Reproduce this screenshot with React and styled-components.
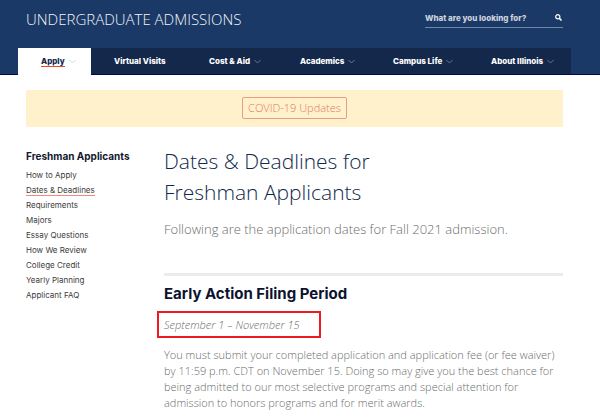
import React from 'react';
import styled, { createGlobalStyle } from 'styled-components';

const GlobalStyle = createGlobalStyle`
  * {
    box-sizing: border-box;
  }

  body {
    margin: 0;
    background: #fff;
    color: #6c6c6c;
    font-family: 'Open Sans', 'Noto Sans', sans-serif;
    font-weight: 300;
  }

  a {
    color: inherit;
    text-decoration: none;
  }

  h1, h2, p, ul {
    margin: 0;
    padding: 0;
  }

  ul {
    list-style: none;
  }
`;

const Header = styled.header`
  padding: 0 29px 0 18px;
  background: #1b3966;
  border-bottom: 1px solid #05054a;
`;

const TopBar = styled.div`
  display: flex;
  justify-content: space-between;
  align-items: flex-start;
  padding: 8px 8px 18px;
`;

const SiteTitle = styled.a`
  color: #f2f5fa;
  font-size: 15px;
  line-height: 22px;
`;

const Search = styled.form`
  display: flex;
  align-items: center;
  width: 138px;
  height: 20px;
  border-bottom: 1px solid #6f86a8;
`;

const SearchInput = styled.input`
  flex: 1;
  min-width: 0;
  padding: 0;
  border: 0;
  outline: 0;
  background: transparent;
  color: #fff;
  font-family: Inter, sans-serif;
  font-size: 8px;
  font-weight: 800;

  &::placeholder {
    color: #cdd3dc;
    opacity: 1;
  }
`;

const SearchButton = styled.button`
  display: flex;
  padding: 0 1px 0 0;
  border: 0;
  background: transparent;
  color: #fff;
  cursor: pointer;
`;

const Nav = styled.nav`
  display: grid;
  grid-template-columns: 73fr 95fr 91fr 93fr 98fr 103fr;
  background: #14284b;
`;

const NavLink = styled.a`
  display: flex;
  align-items: center;
  gap: 4px;
  height: ${props => (props.$active ? '27px' : '26px')};
  padding-left: 23px;
  margin-bottom: ${props => (props.$active ? '-1px' : '0')};
  background: ${props => (props.$active ? '#fff' : 'transparent')};
  color: ${props => (props.$active ? '#13294b' : '#fff')};
  font-family: Inter, sans-serif;
  font-size: 8px;
  font-weight: 800;
  line-height: 10px;
  white-space: nowrap;

  span {
    border-bottom: 1px solid ${props => (props.$active ? '#e84a27' : 'transparent')};
  }

  svg {
    color: ${props => (props.$active ? '#d5d8dd' : '#64779a')};
  }
`;

const Page = styled.div`
  padding: 15px 37px 0 26px;
`;

const Alert = styled.div`
  display: flex;
  justify-content: center;
  padding: 7px 8px 8px;
  border-radius: 1px;
  background: #fff1cc;
`;

const AlertLink = styled.a`
  padding: 0 5px;
  border: 1px solid #ea9c86;
  border-radius: 2px;
  color: #e07a66;
  font-size: 11px;
  line-height: 20px;
`;

const Columns = styled.div`
  display: grid;
  grid-template-columns: 112px 1fr;
  gap: 26px;
  padding-top: 19px;
`;

const SideTitle = styled.a`
  display: block;
  margin-bottom: 2px;
  color: #13182f;
  font-family: Inter, sans-serif;
  font-size: 10px;
  font-weight: 700;
  line-height: 20px;
  white-space: nowrap;
`;

const SideItem = styled.li`
  color: #3c3c3c;
  font-family: Inter, sans-serif;
  font-size: 8px;
  font-weight: 400;
  line-height: 15px;

  a {
    display: inline-block;
    line-height: 9px;
    border-bottom: 1px solid ${props => (props.$active ? '#ee8a75' : 'transparent')};
  }
`;

const Title = styled.h1`
  max-width: 230px;
  color: #13294b;
  font-size: 21px;
  font-weight: 300;
  line-height: 31px;
`;

const Intro = styled.p`
  margin-top: 11px;
  font-size: 13px;
  line-height: 20px;
`;

const Section = styled.section`
  margin-top: 34px;
  padding-top: 8px;
  border-top: 3px solid #ebebeb;
`;

const SectionTitle = styled.h2`
  color: #0c1230;
  font-family: Inter, sans-serif;
  font-size: 15px;
  font-weight: 700;
  line-height: 20px;
`;

const DateRange = styled.p`
  width: 164px;
  margin: 7px 0 0 -7px;
  padding: 0 5px;
  border: 2px solid #ee1c20;
  font-size: 11px;
  font-style: italic;
  line-height: 23px;
`;

const Copy = styled.p`
  margin-top: 9px;
  font-size: 11px;
  line-height: 16px;
`;

const Chevron = () => (
  <svg width="7" height="5" viewBox="0 0 7 5" fill="none" stroke="currentColor" aria-hidden="true">
    <path d="M.5 1 3.5 4 6.5 1" />
  </svg>
);

const SearchIcon = () => (
  <svg width="7" height="7" viewBox="0 0 7 7" fill="none" stroke="currentColor" aria-hidden="true">
    <circle cx="2.8" cy="2.8" r="2.1" strokeWidth="1.2" />
    <path d="M4.4 4.4 6.5 6.5" strokeWidth="1.5" />
  </svg>
);

const navItems = [
  { label: 'Apply', menu: true, active: true },
  { label: 'Virtual Visits' },
  { label: 'Cost & Aid', menu: true },
  { label: 'Academics', menu: true },
  { label: 'Campus Life', menu: true },
  { label: 'About Illinois', menu: true },
];

const sideItems = [
  'How to Apply',
  'Dates & Deadlines',
  'Requirements',
  'Majors',
  'Essay Questions',
  'How We Review',
  'College Credit',
  'Yearly Planning',
  'Applicant FAQ',
];

const App = () => (
  <>
    <GlobalStyle />
    <Header>
      <TopBar>
        <SiteTitle href="#">UNDERGRADUATE ADMISSIONS</SiteTitle>
        <Search role="search">
          <SearchInput type="text" aria-label="Search" placeholder="What are you looking for?" />
          <SearchButton type="submit" aria-label="Submit search">
            <SearchIcon />
          </SearchButton>
        </Search>
      </TopBar>
      <Nav>
        {navItems.map(item => (
          <NavLink key={item.label} href="#" $active={item.active}>
            <span>{item.label}</span>
            {item.menu && <Chevron />}
          </NavLink>
        ))}
      </Nav>
    </Header>

    <Page>
      <Alert>
        <AlertLink href="#">COVID-19 Updates</AlertLink>
      </Alert>

      <Columns>
        <aside>
          <SideTitle href="#">Freshman Applicants</SideTitle>
          <ul>
            {sideItems.map(label => (
              <SideItem key={label} $active={label === 'Dates & Deadlines'}>
                <a href="#">{label}</a>
              </SideItem>
            ))}
          </ul>
        </aside>

        <main>
          <Title>Dates &amp; Deadlines for Freshman Applicants</Title>
          <Intro>Following are the application dates for Fall 2021 admission.</Intro>
          <Section>
            <SectionTitle>Early Action Filing Period</SectionTitle>
            <DateRange>September 1 – November 15</DateRange>
            <Copy>
              You must submit your completed application and application fee (or fee waiver)
              by 11:59 p.m. CDT on November 15. Doing so may give you the best chance for
              being admitted to our most selective programs and special attention for
              admission to honors programs and for merit awards.
            </Copy>
          </Section>
        </main>
      </Columns>
    </Page>
  </>
);

export default App;
